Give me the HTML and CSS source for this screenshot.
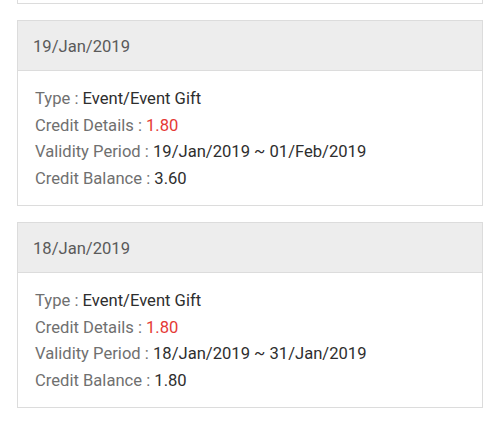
FILE: index.html
```html
<!DOCTYPE html>
<html>
<head>
<meta charset="utf-8">
<link rel="stylesheet" href="styles.css">
</head>
<body>
<div class="list">
  <div class="card card-tail"></div>
  <div class="card">
    <div class="card-head">19/Jan/2019</div>
    <div class="card-body">
      <div class="row"><span class="label">Type : </span><span class="value">Event/Event Gift</span></div>
      <div class="row"><span class="label">Credit Details : </span><span class="value red">1.80</span></div>
      <div class="row"><span class="label">Validity Period : </span><span class="value">19/Jan/2019 ~ 01/Feb/2019</span></div>
      <div class="row"><span class="label">Credit Balance : </span><span class="value">3.60</span></div>
    </div>
  </div>
  <div class="card">
    <div class="card-head">18/Jan/2019</div>
    <div class="card-body">
      <div class="row"><span class="label">Type : </span><span class="value">Event/Event Gift</span></div>
      <div class="row"><span class="label">Credit Details : </span><span class="value red">1.80</span></div>
      <div class="row"><span class="label">Validity Period : </span><span class="value">18/Jan/2019 ~ 31/Jan/2019</span></div>
      <div class="row"><span class="label">Credit Balance : </span><span class="value">1.80</span></div>
    </div>
  </div>
</div>
</body>
</html>
```
FILE: styles.css
```css
html, body {
  margin: 0;
  padding: 0;
  background: #ffffff;
}
body {
  font-family: Roboto, "Liberation Sans", sans-serif;
  font-size: 16.6px;
}
.list {
  display: flex;
  flex-direction: column;
  gap: 16px;
  padding: 0 17px;
}
.card {
  border: 1px solid #dcdcdc;
  background: #fff;
}
.card-tail {
  border-top: none;
  height: 3px;
}
.card-head {
  background: #ededed;
  border-bottom: 1px solid #dcdcdc;
  height: 49px;
  line-height: 51px;
  padding-left: 15px;
  color: #5a5a5a;
}
.card-body {
  padding: 15px 17px 13px;
  line-height: 26.5px;
}
.label {
  color: #707070;
}
.value {
  color: #2e2e2e;
}
.red {
  color: #e53935;
}
```
